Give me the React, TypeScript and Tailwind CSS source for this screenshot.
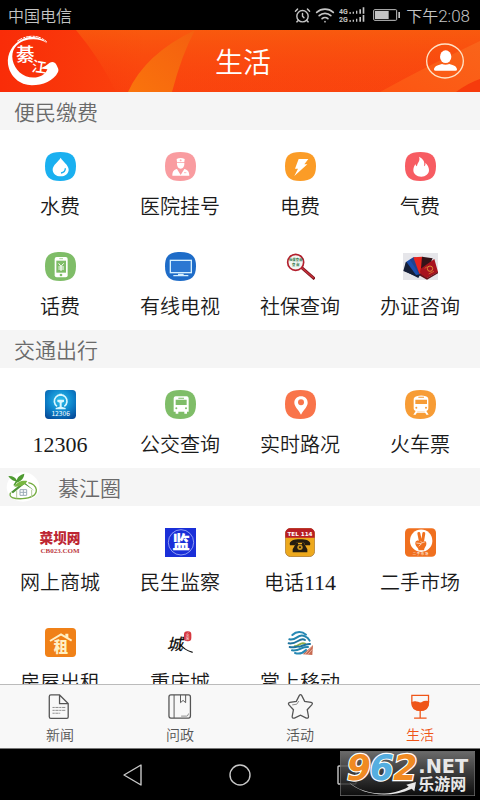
import type { ReactNode } from 'react'
import { AlarmClock, Wifi } from 'lucide-react'

const SANS = '"Noto Sans CJK SC", sans-serif'

type Item = { label: string; digits?: string; icon: ReactNode }

function Blob({ color, children }: { color: string; children: ReactNode }) {
  return (
    <svg viewBox="0 0 93 87" className="h-[29px] w-[31px]" aria-hidden="true">
      <path d="M46 0C79 0 93 12 93 43S79 87 46 87 0 75 0 43 13 0 46 0Z" fill={color} />
      {children}
    </svg>
  )
}

function WaterIcon() {
  return (
    <Blob color="#1ab0f0">
      <path d="M47 17C41 28 23 39 23 53c0 11 10 20 24 20s24-9 24-20C71 39 53 28 47 17Z" fill="#fff" />
      <path d="M61 49c0 8-5 13-13 14" stroke="#1ab0f0" strokeWidth="4" fill="none" />
    </Blob>
  )
}

function DoctorIcon() {
  return (
    <Blob color="#f99ca0">
      <path d="M35 21c7-4 17-4 24 0l-1 9H36Z" fill="#fff" />
      <path d="M36 32h22c1 9-4 18-11 18s-12-9-11-18Z" fill="#fff" />
      <path d="M22 71c0-13 5-18 14-20l11 18 11-18c9 2 15 7 15 20Z" fill="#fff" />
      <path d="M47 22v6M44 25h6M57 62h7" stroke="#f99ca0" strokeWidth="2" />
    </Blob>
  )
}

function PowerIcon() {
  return (
    <Blob color="#fb9c27">
      <path d="M41 21h29L58 37h9L28 72l11-22h-9Z" fill="#fff" />
    </Blob>
  )
}

function FlameIcon() {
  return (
    <Blob color="#f75c62">
      <path
        d="M42 14c15 8 18 17 15 29 4-2 5-6 4-11 7 7 11 14 11 22 0 12-10 20-23 20-14 0-24-8-24-20 0-8 4-13 6-18 1 4 3 6 5 7 0-11 11-15 6-29Z"
        fill="#fff"
      />
    </Blob>
  )
}

function PhoneBillIcon() {
  return (
    <Blob color="#7fbd68">
      <rect x="29" y="15" width="39" height="61" rx="6" fill="#fff" />
      <rect x="34" y="26" width="29" height="36" fill="#7fbd68" />
      <path d="M43 20h11" stroke="#7fbd68" strokeWidth="2" />
      <path d="m41 34 7 9 8-9M48 43v14M40 45h17M40 51h17" stroke="#fff" strokeWidth="3" fill="none" />
      <circle cx="48" cy="69" r="4" fill="#7fbd68" />
    </Blob>
  )
}

function TvIcon() {
  return (
    <Blob color="#1e6cc8">
      <rect x="16" y="25" width="63" height="37" fill="#2b78d2" stroke="#d5f0ff" strokeWidth="4" />
      <path d="M39 65h17v4h14v4H25v-4h14Z" fill="#d5f0ff" />
    </Blob>
  )
}

function MagnifierIcon() {
  return (
    <svg viewBox="0 0 87 81" className="h-[27px] w-[29px]" aria-hidden="true">
      <path d="m47 44 39 34" stroke="#7f1820" strokeWidth="9" />
      <path d="m47 44 36 31" stroke="#c9313b" strokeWidth="4" />
      <circle cx="29" cy="28" r="24" fill="#f3f6f2" stroke="#b3202e" strokeWidth="5" />
      <text x="29" y="25" textAnchor="middle" fontSize="10" fontWeight="700" fill="#287244">社保查询</text>
      <text x="29" y="39" textAnchor="middle" fontSize="10" fontWeight="700" fill="#287244">查 询</text>
    </svg>
  )
}

function PassportsIcon() {
  return (
    <svg viewBox="0 0 105 81" className="h-[27px] w-[35px]" aria-hidden="true">
      <rect width="105" height="81" fill="#e6e6ea" />
      <path d="m5 54 6-24 48 20-13 25Z" fill="#13203f" />
      <path d="m1 54 7-26 17-6 32 42-13 7Z" fill="#151f38" />
      <path d="m10 26 22-14 26 50-19 4Z" fill="#1c4fae" />
      <path d="m21 20 16-8 22 48-12 2Z" fill="#20438f" />
      <path d="m31 13 27-2 5 47-14 4Z" fill="#e8251f" />
      <path d="m57 11 32 5-21 47-15-5Z" fill="#321318" />
      <path d="m53 47 41-29 11 39-34 19-19-12Z" fill="#a8121e" />
      <path d="m52 62 20 13 33-19v5L72 80 51 68Z" fill="#641018" />
      <circle cx="81" cy="47" r="8" fill="none" stroke="#dd8a35" strokeWidth="3" />
      <path d="m77 63 16-8M65 46l8-5" stroke="#dd8a35" strokeWidth="2" />
    </svg>
  )
}

function RailwayIcon() {
  return (
    <svg viewBox="0 0 93 87" className="h-[29px] w-[31px]" aria-hidden="true">
      <defs>
        <radialGradient id="rail" cx=".5" cy=".35" r=".75">
          <stop offset="0" stopColor="#2cc0ec" />
          <stop offset=".55" stopColor="#0d83cb" />
          <stop offset="1" stopColor="#064a98" />
        </radialGradient>
      </defs>
      <rect width="93" height="87" rx="11" fill="url(#rail)" />
      <path d="M36 49a19 19 0 1 1 22 0" fill="none" stroke="#d9f6ff" strokeWidth="5" />
      <path d="M37 29h20v6l-7 3v12l12 4v4H32v-4l12-4V38l-7-3ZM43 11h8v6h-8Z" fill="#d9f6ff" />
      <text x="47" y="79" textAnchor="middle" fontSize="20" fill="#fff">12306</text>
    </svg>
  )
}

function BusIcon() {
  return (
    <Blob color="#7fbd68">
      <path d="M32 19h33c4 0 6 3 6 7v39h-5v6h-8v-6H40v6h-8v-6h-6V26c0-4 2-7 6-7Z" fill="#fff" />
      <path d="M32 29h33v16H32ZM40 23h17v3H40Z" fill="#7fbd68" />
      <circle cx="34" cy="55" r="3" fill="#7fbd68" />
      <circle cx="63" cy="55" r="3" fill="#7fbd68" />
    </Blob>
  )
}

function PinIcon() {
  return (
    <Blob color="#f9744a">
      <path d="M48 19c12 0 20 8 20 19 0 12-12 21-20 36-7-15-20-24-20-36 0-11 9-19 20-19Z" fill="#fff" />
      <circle cx="48" cy="37" r="9" fill="#f9744a" />
    </Blob>
  )
}

function TrainIcon() {
  return (
    <Blob color="#f79c35">
      <path d="M35 19c8-3 19-3 27 0 6 2 8 4 8 10v26c0 5-2 7-6 8l7 11h-7l-3-5H35l-3 5h-7l7-11c-4-1-6-3-6-8V29c0-6 3-8 9-10Z" fill="#fff" />
      <path d="M40 20h17v3H40ZM31 29h35v13H31ZM37 65h22l1 2H36Z" fill="#f79c35" />
      <circle cx="34" cy="53" r="3" fill="#f79c35" />
      <circle cx="63" cy="53" r="3" fill="#f79c35" />
    </Blob>
  )
}

function CaibaIcon() {
  return (
    <svg viewBox="0 0 132 87" className="h-[29px] w-11" aria-hidden="true">
      <text x="66" y="46" textAnchor="middle" fontSize="41" fontWeight="900" fill="#bd2632">菜坝网</text>
      <text x="66" y="74" textAnchor="middle" fontSize="21" fontWeight="700" fill="#bd3a43" fontFamily="Liberation Serif, serif">
        CB023.COM
      </text>
    </svg>
  )
}

function SuperviseIcon() {
  return (
    <svg viewBox="0 0 93 87" className="h-[29px] w-[31px]" aria-hidden="true">
      <rect width="93" height="87" fill="#1a2fd8" />
      <circle cx="48" cy="43" r="38" fill="none" stroke="#c5d0ff" strokeWidth="2" />
      <text x="48" y="62" textAnchor="middle" fontSize="53" fontWeight="900" fill="#fff">监</text>
    </svg>
  )
}

function TelIcon() {
  return (
    <svg viewBox="0 0 90 87" className="h-[29px] w-[30px]" aria-hidden="true">
      <rect x="1" y="1" width="88" height="85" rx="16" fill="#eda91d" stroke="#9b6b2c" strokeWidth="2" />
      <path d="M1 29V17C1 7 7 1 17 1h56c10 0 16 6 16 16v12Z" fill="#b81e24" />
      <text x="45" y="23" textAnchor="middle" fontSize="17" fontWeight="700" fill="#fff" fontFamily="DejaVu Sans, sans-serif">TEL 114</text>
      <path d="M14 47c2-9 12-13 31-13s30 4 31 13l-1 5H60l-3-8H34l-3 8H15Z" fill="#251d10" />
      <path d="M34 44h5v5h12v-5h5l11 20v9H23v-9Z" fill="#251d10" />
      <circle cx="45" cy="58" r="8" fill="#c99422" />
      <circle cx="45" cy="58" r="3" fill="#251d10" />
    </svg>
  )
}

function SecondHandIcon() {
  return (
    <svg viewBox="0 0 94 87" className="h-[29px] w-[31px]" aria-hidden="true">
      <rect width="94" height="87" rx="13" fill="#f0701f" />
      <circle cx="49" cy="38" r="34" fill="#fff" />
      <path d="m42 16 5 25M57 16l-4 25" stroke="#f0701f" strokeWidth="9" strokeLinecap="round" />
      <path d="M32 42c2-5 8-6 13-3h16c5 2 5 12 1 17-2 4-4 7-4 11H41c0-4-2-7-5-10-4-4-6-10-4-15Z" fill="#f0701f" />
      <path d="m34 45 16 2-8 8M47 40l5 4 10-3" stroke="#fff" strokeWidth="2" fill="none" />
      <text x="47" y="82" textAnchor="middle" fontSize="10" fill="#fff">二 手 市 场</text>
    </svg>
  )
}

function RentIcon() {
  return (
    <svg viewBox="0 0 93 87" className="h-[29px] w-[31px]" aria-hidden="true">
      <rect width="93" height="87" rx="11" fill="#f08118" />
      <path d="m15 39 33-20 32 19" fill="none" stroke="#fff0c4" strokeWidth="6" />
      <path d="M61 17h9v14l-9-5Z" fill="#fff0c4" />
      <text x="48" y="71" textAnchor="middle" fontSize="43" fontWeight="900" fill="#fff0c4">租</text>
    </svg>
  )
}

function CityIcon() {
  return (
    <svg viewBox="0 0 84 87" className="h-[29px] w-7" aria-hidden="true">
      <text x="26" y="66" textAnchor="middle" fontSize="48" fontWeight="500" fontStyle="italic" fill="#111">城</text>
      <path d="M42 48c9 14 20 20 38 25" stroke="#111" strokeWidth="4" fill="none" />
      <rect x="54" y="10" width="22" height="30" rx="10" fill="#d6383f" />
      <text x="65" y="24" textAnchor="middle" fontSize="11" fill="#fff">重</text>
      <text x="65" y="36" textAnchor="middle" fontSize="11" fill="#fff">庆</text>
    </svg>
  )
}

function MobileIcon() {
  return (
    <svg viewBox="0 0 78 78" className="h-[26px] w-[26px]" aria-hidden="true">
      <path d="m78 45-31 28 29 2Z" fill="#c76b52" />
      <path d="m76 47-22 26m22-15L62 74" stroke="#f5d1c2" strokeWidth="2" />
      <g fill="none" strokeWidth="6" strokeLinecap="round">
        <path d="M16 15c12-12 29-12 41-1" stroke="#2789b5" />
        <path d="M7 28c10 2 16-1 23-6s16-7 24-3c8 3 11 7 14 13" stroke="#2384ad" />
        <path d="M5 40c13 2 20-2 28-7s15-7 21-3" stroke="#1e739e" />
        <path d="M23 49c14 0 17-15 31-8" stroke="#91ad45" />
        <path d="M8 51c12 4 21-3 27-1s18-9 34-8" stroke="#1e739e" />
        <path d="M15 61c13 2 20-2 28-6s12-4 20-4" stroke="#2384ad" />
        <path d="M24 69c12 4 25-1 33-9" stroke="#2789b5" />
      </g>
    </svg>
  )
}

function VillageLogo() {
  return (
    <svg viewBox="0 0 102 90" className="h-[30px] w-[34px]" aria-hidden="true">
      <ellipse cx="51" cy="45" rx="49" ry="44" fill="#fff" />
      <path d="M14 62C6 76 24 81 49 80s43-10 42-27c-2-11-10-18-24-21" fill="none" stroke="#75ad42" strokeWidth="4" />
      <path d="m15 60 38-31 32 27-30-20-34 28Z" fill="#4d9238" />
      <path d="M29 28C17 26 10 17 7 12c13-1 22 4 25 13 3-11 10-16 23-20-1 13-8 22-23 27l-5 9-5-1Z" fill="#4f9b32" />
      <path d="M25 44c11-18 25-19 39-17-6 11-18 17-36 17Z" fill="#77b742" />
      <path d="M32 55v24M77 53v22" stroke="#b3c99b" strokeWidth="3" />
      <path d="M42 53h20v17H42ZM52 53v17M42 61h20" fill="none" stroke="#9babb8" strokeWidth="3" />
    </svg>
  )
}

function AppLogo() {
  return (
    <svg viewBox="0 0 160 156" className="h-[52px] w-[53px]" role="img" aria-label="綦江">
      <path
        d="M122 25C106 6 72 0 46 12 15 27 0 56 3 87c5 38 36 64 72 64 33 0 66-13 79-40 4-8-2-15-5-22-4-8-12-10-20-6l-13 10-16 8 22 2c-7 16-23 25-42 25-33 0-57-24-63-53-5-28 10-49 34-58 26-8 52-5 71 8Z"
        fill="#fff"
      />
      <path d="M9 58c-7 40 10 72 46 88M31 18C57 0 93-4 120 20" stroke="#fff" strokeWidth="3" strokeDasharray="17 3 7 2" fill="none" />
      <text x="55" y="77" textAnchor="middle" fontSize="56" fontWeight="500" fill="#fff">綦</text>
      <g transform="rotate(8 98 100)">
        <text x="97" y="112" textAnchor="middle" fontSize="44" fontWeight="500" fill="#fff">江</text>
      </g>
    </svg>
  )
}

const utilities: Item[] = [
  { label: '水费', icon: <WaterIcon /> },
  { label: '医院挂号', icon: <DoctorIcon /> },
  { label: '电费', icon: <PowerIcon /> },
  { label: '气费', icon: <FlameIcon /> },
  { label: '话费', icon: <PhoneBillIcon /> },
  { label: '有线电视', icon: <TvIcon /> },
  { label: '社保查询', icon: <MagnifierIcon /> },
  { label: '办证咨询', icon: <PassportsIcon /> },
]

const travel: Item[] = [
  { label: '', digits: '12306', icon: <RailwayIcon /> },
  { label: '公交查询', icon: <BusIcon /> },
  { label: '实时路况', icon: <PinIcon /> },
  { label: '火车票', icon: <TrainIcon /> },
]

const local: Item[] = [
  { label: '网上商城', icon: <CaibaIcon /> },
  { label: '民生监察', icon: <SuperviseIcon /> },
  { label: '电话', digits: '114', icon: <TelIcon /> },
  { label: '二手市场', icon: <SecondHandIcon /> },
  { label: '房屋出租', icon: <RentIcon /> },
  { label: '重庆城', icon: <CityIcon /> },
  { label: '掌上移动', icon: <MobileIcon /> },
]

function Section({ title, logo, items }: { title: string; logo?: ReactNode; items: Item[] }) {
  return (
    <section>
      <div className="flex h-[38px] items-center bg-[#f5f5f5]">
        {logo && <span className="ml-1.5 w-[38px] shrink-0">{logo}</span>}
        <h2 className="px-3.5 text-[21px] leading-7 font-[350] text-[#6a6a6a]">{title}</h2>
      </div>
      <div className="grid grid-cols-4">
        {items.map((item) => (
          <a key={item.label} href="#" className="flex flex-col items-center gap-[11px] pt-[22px] pb-2.5">
            <span className="flex h-[29px] items-center">{item.icon}</span>
            <span className="text-xl leading-7 font-[350] whitespace-nowrap text-[#1a1a1a]">
              {item.label}
              {item.digits && (
                <span className="font-['Liberation_Serif',serif] text-[22px] leading-none font-normal">{item.digits}</span>
              )}
            </span>
          </a>
        ))}
      </div>
    </section>
  )
}

const tabs = [
  {
    label: '新闻',
    active: false,
    icon: (
      <>
        <path d="M10 3h27l27 27v42q0 4-4 4H10q-5 0-5-5V8q0-5 5-5ZM37 3v27h27" />
        <path d="M15 42h42M15 51h42M15 60h24" strokeWidth="2" strokeDasharray="7 2 10 2" />
      </>
    ),
  },
  {
    label: '问政',
    active: false,
    icon: (
      <>
        <rect x="4" y="3" width="67" height="72" rx="6" />
        <path d="M20 3v72M40 3v24l8-7 8 7V3" strokeWidth="3" />
        <path d="M42 69h17q5 0 6-8" strokeWidth="2" />
      </>
    ),
  },
  {
    label: '活动',
    active: false,
    icon: (
      <>
        <path d="M36 5q4-6 8 0l9 18 20 3q7 2 2 8L61 49l4 21q0 7-7 5L40 66 21 75q-7 2-7-5l4-21L4 34q-4-6 3-8l20-3Z" />
        <path d="M14 34l14-2 7-10" strokeWidth="2" />
      </>
    ),
  },
  {
    label: '生活',
    active: true,
    icon: (
      <>
        <path d="M13 4h52v23c0 15-10 24-26 24S13 42 13 27ZM39 51v23M20 75h39" />
        <path d="M14 27c14-9 20 6 31 0 9-6 13-5 20-3-1 19-11 27-26 27-14 0-25-8-25-24Z" fill="currentColor" />
      </>
    ),
  },
]

function StatusBar() {
  return (
    <div className="flex h-[30px] shrink-0 items-center justify-between bg-black pr-2.5 pl-2 text-base leading-5 text-[#c4c4c4]">
      <span className="font-[350]">中国电信</span>
      <div className="flex items-center gap-1">
        <AlarmClock size={17} strokeWidth={2} />
        <Wifi size={20} strokeWidth={2} />
        <svg viewBox="0 0 78 48" className="h-4 w-[26px]" aria-hidden="true">
          <g fill="currentColor" fontFamily="Roboto, sans-serif" fontSize="21" fontWeight="700">
            <text x="0" y="20">4G</text>
            <text x="0" y="44">2G</text>
            <path d="M31 16h5v4h-5ZM41 14h4v6h-4ZM51 11h4v9h-4ZM61 7h5v13h-5ZM71 1h5v19h-5ZM31 40h5v4h-5ZM41 38h4v6h-4ZM51 35h4v9h-4ZM61 30h5v14h-5ZM71 24h5v20h-5Z" />
          </g>
        </svg>
        <svg viewBox="0 0 84 36" className="ml-1 h-3 w-7" aria-hidden="true">
          <rect x="2" y="2" width="69" height="32" rx="3" fill="none" stroke="currentColor" strokeWidth="3" />
          <path d="M6 6h41v24H6ZM76 9h5v18h-5Z" fill="currentColor" />
        </svg>
        <time className="ml-px font-[350]">
          下午<span className="font-[Roboto,sans-serif] text-[17px]">2:08</span>
        </time>
      </div>
    </div>
  )
}

function Header() {
  return (
    <header className="relative flex h-[62px] shrink-0 items-center justify-between bg-[#fb4a0d] pr-4 pl-[7px]">
      <svg viewBox="0 0 480 62" preserveAspectRatio="none" className="absolute inset-0 h-full w-full" aria-hidden="true">
        <defs>
          <linearGradient id="base" x1="0" x2="1" y1="0" y2="0">
            <stop offset="0" stopColor="#f92c08" />
            <stop offset=".3" stopColor="#fa430d" />
            <stop offset="1" stopColor="#f9450e" />
          </linearGradient>
          <linearGradient id="glow" x1="0" x2="0" y1="0" y2="1">
            <stop offset="0" stopColor="#f8680f" stopOpacity=".6" />
            <stop offset="1" stopColor="#fc4711" stopOpacity=".1" />
          </linearGradient>
          <linearGradient id="leaf" x1="1" x2="0" y1="0" y2="1">
            <stop offset="0" stopColor="#f45f10" />
            <stop offset="1" stopColor="#fa740c" />
          </linearGradient>
          <linearGradient id="wave" x1="0" x2="1" y1="1" y2="0">
            <stop offset="0" stopColor="#fd5512" />
            <stop offset="1" stopColor="#f9641a" />
          </linearGradient>
        </defs>
        <path d="M0 0h480v62H0Z" fill="url(#base)" />
        <path d="M76 0h404v62H116Q101 30 76 0Z" fill="url(#glow)" />
        <path d="M195 0Q145 24 128 62h44Q182 24 195 0Z" fill="url(#leaf)" />
        <path d="M380 62Q425 37 480 11v51Z" fill="url(#wave)" />
        <path d="M456 62q12-9 24-13v13Z" fill="#f63b0c" />
      </svg>
      <a href="#" className="relative">
        <AppLogo />
      </a>
      <h1 className="relative text-[28px] leading-9 font-[350] text-white">生活</h1>
      <button type="button" aria-label="我的" className="relative rounded-full">
        <svg viewBox="0 0 114 108" className="h-9 w-[38px]">
          <ellipse cx="57" cy="54" rx="55" ry="51" fill="none" stroke="#ffe3c6" strokeWidth="4" />
          <ellipse cx="59" cy="41" rx="17" ry="19" fill="#fff" />
          <path d="M24 80c0-9 10-14 24-17q10 5 22 0c14 3 23 8 23 17q0 3-5 3H29q-5 0-5-3Z" fill="#fff" />
        </svg>
      </button>
    </header>
  )
}

function Watermark() {
  return (
    <svg viewBox="0 0 405 135" className="absolute top-0.5 right-[5px] h-[45px] w-[135px]" role="img" aria-label="962.NET 乐游网">
      <defs>
        <linearGradient id="plate" x1="0" x2="0" y1="0" y2="1">
          <stop offset="0" stopColor="#777" stopOpacity=".9" />
          <stop offset="1" stopColor="#111" stopOpacity=".8" />
        </linearGradient>
      </defs>
      <rect x="1" y="1" width="403" height="133" fill="url(#plate)" stroke="#777" strokeWidth="2" />
      <path d="M27 94c43 38 119 46 179 13l-7-6 29-8-5 28-8-8C144 145 62 130 27 94Z" fill="#e8e8e8" />
      <g fontFamily="DejaVu Sans, sans-serif" fontWeight="700">
        <g fontSize="104" fontStyle="italic" stroke="#fff" strokeWidth="7" paintOrder="stroke">
          <text x="20" y="86" fill="#f08a22">9</text>
          <text x="89" y="86" fill="#55aee0">6</text>
          <text x="160" y="86" fill="#f08a22">2</text>
        </g>
        <text x="235" y="66" fontSize="58" fill="#e8e8e8">.NET</text>
      </g>
      <text x="235" y="118" fontSize="48" fontWeight="700" fill="#e8e8e8">乐游网</text>
    </svg>
  )
}

function AndroidNav() {
  return (
    <div className="relative grid h-[52px] shrink-0 grid-cols-3 items-center justify-items-center border-t border-[#777] bg-black px-20 text-[#c8c8c8]">
      <button type="button" aria-label="返回">
        <svg viewBox="0 0 24 24" className="size-6" fill="none" stroke="currentColor" strokeWidth="1.4" strokeLinejoin="round">
          <path d="M3 12 20 2v20Z" />
        </svg>
      </button>
      <button type="button" aria-label="主页">
        <svg viewBox="0 0 24 24" className="size-6" fill="none" stroke="currentColor" strokeWidth="1.4">
          <circle cx="12" cy="12" r="10" />
        </svg>
      </button>
      <button type="button" aria-label="最近任务">
        <svg viewBox="0 0 24 24" className="size-6" fill="none" stroke="currentColor" strokeWidth="1.4">
          <rect x="3" y="3" width="18" height="18" rx="1" />
        </svg>
      </button>
      <Watermark />
    </div>
  )
}

export default function App() {
  return (
    <div className="flex h-dvh flex-col bg-white" style={{ fontFamily: SANS }}>
      <StatusBar />
      <Header />
      <main className="min-h-0 flex-1 overflow-y-auto [scrollbar-width:none]">
        <Section title="便民缴费" items={utilities} />
        <Section title="交通出行" items={travel} />
        <Section title="綦江圈" logo={<VillageLogo />} items={local} />
      </main>
      <nav className="grid shrink-0 grid-cols-4 border-t border-[#bbb] bg-[#f8f8f8]">
        {tabs.map((tab) => (
          <a
            key={tab.label}
            href="#"
            aria-current={tab.active ? 'page' : undefined}
            className={`flex flex-col items-center gap-1 pt-[9px] pb-[3px] ${tab.active ? 'text-[#ef5518]' : 'text-[#555]'}`}
          >
            <svg viewBox="0 0 80 78" className="h-[25px] w-[27px]" fill="none" stroke="currentColor" strokeWidth="4" aria-hidden="true">
              {tab.icon}
            </svg>
            <span className="text-sm leading-[22px] font-[350]">{tab.label}</span>
          </a>
        ))}
      </nav>
      <AndroidNav />
    </div>
  )
}
